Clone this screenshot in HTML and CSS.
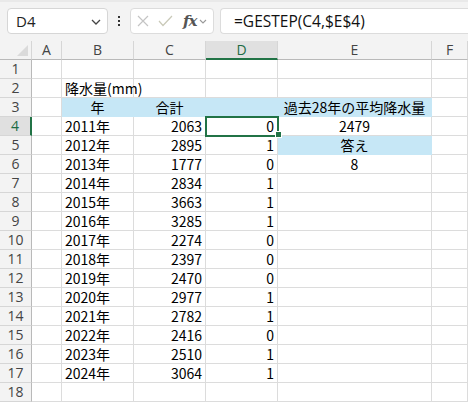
FILE: index.html
```html
<!DOCTYPE html>
<html lang="ja">
<head>
<meta charset="utf-8">
<link rel="stylesheet" href="styles.css">
</head>
<body>
<div class="toolbar">
  <div class="namebox"><span class="name">D4</span>
    <svg class="chev" width="10" height="6" viewBox="0 0 10 6"><path d="M1 1 L5 5 L9 1" fill="none" stroke="#444" stroke-width="1.3"/></svg>
  </div>
  <div class="dots"><i></i><i></i><i></i></div>
  <div class="fxbox">
    <svg width="12" height="12" viewBox="0 0 12 12"><path d="M1 1 L11 11 M11 1 L1 11" stroke="#c4c4c4" stroke-width="1.2" fill="none"/></svg>
    <svg width="15" height="12" viewBox="0 0 15 12"><path d="M1 6 L5 10.5 L14 1" stroke="#c9c9b8" stroke-width="1.2" fill="none"/></svg>
    <span class="fx">fx</span>
    <svg class="chev2" width="8" height="5" viewBox="0 0 8 5"><path d="M1 1 L4 4 L7 1" fill="none" stroke="#999" stroke-width="1.1"/></svg>
  </div>
  <div class="formula">=GESTEP(C4,$E$4)</div>
</div>
<div class="sheet">
  <div class="corner"><span class="tri"></span></div>
  <div class="ch">A</div><div class="ch">B</div><div class="ch">C</div><div class="ch sel">D</div><div class="ch">E</div><div class="ch">F</div>

  <div class="rh">1</div><div class="c"></div><div class="c"></div><div class="c"></div><div class="c"></div><div class="c"></div><div class="c"></div>
  <div class="rh">2</div><div class="c"></div><div class="c ov">降水量(mm)</div><div class="c"></div><div class="c"></div><div class="c"></div><div class="c"></div>
  <div class="rh">3</div><div class="c"></div><div class="c blue ctr">年</div><div class="c blue ctr">合計</div><div class="c blue"></div><div class="c blue ctr">過去28年の平均降水量</div><div class="c"></div>
  <div class="rh rsel">4</div><div class="c"></div><div class="c">2011年</div><div class="c r">2063</div><div class="c r active">0<span class="handle"></span></div><div class="c ctr">2479</div><div class="c"></div>
  <div class="rh">5</div><div class="c"></div><div class="c">2012年</div><div class="c r">2895</div><div class="c r">1</div><div class="c blue ctr">答え</div><div class="c"></div>
  <div class="rh">6</div><div class="c"></div><div class="c">2013年</div><div class="c r">1777</div><div class="c r">0</div><div class="c ctr">8</div><div class="c"></div>
  <div class="rh">7</div><div class="c"></div><div class="c">2014年</div><div class="c r">2834</div><div class="c r">1</div><div class="c"></div><div class="c"></div>
  <div class="rh">8</div><div class="c"></div><div class="c">2015年</div><div class="c r">3663</div><div class="c r">1</div><div class="c"></div><div class="c"></div>
  <div class="rh">9</div><div class="c"></div><div class="c">2016年</div><div class="c r">3285</div><div class="c r">1</div><div class="c"></div><div class="c"></div>
  <div class="rh">10</div><div class="c"></div><div class="c">2017年</div><div class="c r">2274</div><div class="c r">0</div><div class="c"></div><div class="c"></div>
  <div class="rh">11</div><div class="c"></div><div class="c">2018年</div><div class="c r">2397</div><div class="c r">0</div><div class="c"></div><div class="c"></div>
  <div class="rh">12</div><div class="c"></div><div class="c">2019年</div><div class="c r">2470</div><div class="c r">0</div><div class="c"></div><div class="c"></div>
  <div class="rh">13</div><div class="c"></div><div class="c">2020年</div><div class="c r">2977</div><div class="c r">1</div><div class="c"></div><div class="c"></div>
  <div class="rh">14</div><div class="c"></div><div class="c">2021年</div><div class="c r">2782</div><div class="c r">1</div><div class="c"></div><div class="c"></div>
  <div class="rh">15</div><div class="c"></div><div class="c">2022年</div><div class="c r">2416</div><div class="c r">0</div><div class="c"></div><div class="c"></div>
  <div class="rh">16</div><div class="c"></div><div class="c">2023年</div><div class="c r">2510</div><div class="c r">1</div><div class="c"></div><div class="c"></div>
  <div class="rh">17</div><div class="c"></div><div class="c">2024年</div><div class="c r">3064</div><div class="c r">1</div><div class="c"></div><div class="c"></div>
  <div class="rh">18</div><div class="c"></div><div class="c"></div><div class="c"></div><div class="c"></div><div class="c"></div><div class="c"></div>
</div>
</body>
</html>
```
FILE: styles.css
```css
html, body {
  margin: 0;
  padding: 0;
  background: #ffffff;
  overflow: hidden;
}
body {
  font-family: "Noto Sans CJK JP", "Noto Sans", sans-serif;
  color: #000;
}
.toolbar {
  height: 41px;
  box-sizing: border-box;
  background: #f3f3f3;
  border-top: 2px solid #e9e9e9;
  display: flex;
  align-items: flex-start;
  padding: 6px 0 0 7px;
}
.namebox {
  width: 101px;
  height: 26px;
  box-sizing: border-box;
  background: #fff;
  border: 1px solid #d6d6d6;
  border-radius: 4px;
  display: flex;
  align-items: center;
  justify-content: space-between;
  padding: 0 6px 0 8px;
  font-family: "Open Sans", "Noto Sans", sans-serif;
  font-size: 15px;
  color: #222;
}
.chev { margin-top: 2px; }
.dots {
  width: 22px;
  height: 26px;
  display: flex;
  flex-direction: column;
  align-items: center;
  justify-content: center;
  gap: 2px;
}
.dots i {
  display: block;
  width: 2px;
  height: 2px;
  background: #333;
}
.fxbox {
  width: 84px;
  height: 26px;
  box-sizing: border-box;
  background: #fff;
  border: 1px solid #dcdcdc;
  border-radius: 4px;
  display: flex;
  align-items: center;
  padding-left: 6px;
  gap: 9px;
}
.fx {
  font-family: "DejaVu Serif", "Liberation Serif", serif;
  font-style: italic;
  font-weight: bold;
  font-size: 15px;
  color: #555;
  letter-spacing: -1px;
  margin-left: 1px;
}
.chev2 { margin-left: -6px; }
.formula {
  margin-left: 6px;
  flex: 1;
  height: 26px;
  box-sizing: border-box;
  background: #fff;
  border: 1px solid #dcdcdc;
  border-right: none;
  border-radius: 4px 0 0 4px;
  padding-left: 13px;
  font-family: "Open Sans", "Noto Sans", sans-serif;
  font-size: 15.5px;
  line-height: 24px;
  color: #111;
}
.sheet {
  display: grid;
  grid-template-columns: 32px 30px 72px 72px 72px 154px 36px;
  grid-auto-rows: 19px;
  font-size: 14px;
}
.sheet > div {
  box-sizing: border-box;
  border-right: 1px solid #dcdcdc;
  border-bottom: 1px solid #dcdcdc;
  line-height: 18px;
  white-space: nowrap;
  position: relative;
}
.corner, .ch, .rh {
  background: #f3f3f3;
  color: #444;
  text-align: center;
}
.sheet > .corner { border-right-color: #d6d6d6; border-bottom: 1px solid #b9b9b9; }
.tri {
  position: absolute;
  right: 3px;
  bottom: 3px;
  width: 0;
  height: 0;
  border-left: 11px solid transparent;
  border-bottom: 11px solid #dadada;
}
.sheet > .ch {
  border-right-color: #d6d6d6;
  border-bottom: 1px solid #b9b9b9;
  font-family: "Open Sans", "Noto Sans", sans-serif;
  font-size: 14px;
}
.sheet > .ch.sel {
  background: #e0e0e0;
  border-bottom: 2px solid #217346;
  color: #1e6b43;
}
.sheet > .rh {
  border-right: 1px solid #b9b9b9;
  border-bottom-color: #d6d6d6;
  font-family: "Open Sans", "Noto Sans", sans-serif;
  font-size: 14px;
}
.sheet > .rh.rsel {
  background: #e0e0e0;
  border-right: 2px solid #217346;
  color: #1e6b43;
}
.c { padding: 0 3px; }
.ov { overflow: visible; z-index: 1; }
.r { text-align: right; }
.ctr { text-align: center; }
.sheet > .blue {
  background: #c6e7f6;
  border-color: #c6e7f6;
}
.active::after {
  content: "";
  position: absolute;
  left: -1px;
  top: -1px;
  width: 74px;
  height: 21px;
  box-sizing: border-box;
  border: 2px solid #217346;
  z-index: 2;
}
.handle {
  position: absolute;
  left: 69px;
  top: 14px;
  width: 7px;
  height: 7px;
  box-sizing: border-box;
  background: #217346;
  border: 1px solid #fff;
  z-index: 3;
}
```
